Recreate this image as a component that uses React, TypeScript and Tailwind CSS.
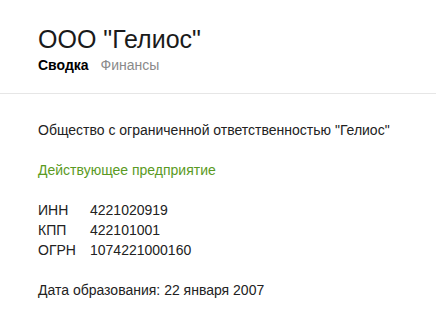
const font = { fontFamily: '"Liberation Sans", Arial, sans-serif' };

const codes = [
  { label: "ИНН", value: "4221020919" },
  { label: "КПП", value: "422101001" },
  { label: "ОГРН", value: "1074221000160" },
];

export default function App() {
  return (
    <div className="w-[436px] h-[313px] bg-white text-[#222]" style={font}>
      <div className="px-[38px] pt-[25px] pb-[18px] border-b border-[#e6e6e6]">
        <h1 className="text-[25px] leading-[28px] text-[#1a1a1a]">ООО "Гелиос"</h1>
        <div className="mt-[2px] flex gap-[12px] text-[14px] leading-[20px]">
          <span className="font-bold text-black">Сводка</span>
          <span className="text-[#8a8a8a]">Финансы</span>
        </div>
      </div>
      <div className="px-[38px] pt-[26px] text-[14px] leading-[20px] flex flex-col gap-[20px]">
        <p>Общество с ограниченной ответственностью "Гелиос"</p>
        <p className="text-[#5a9a23]">Действующее предприятие</p>
        <div>
          {codes.map((c) => (
            <div key={c.label} className="flex">
              <span className="w-[52px]">{c.label}</span>
              <span>{c.value}</span>
            </div>
          ))}
        </div>
        <p>Дата образования: 22 января 2007</p>
      </div>
    </div>
  );
}
